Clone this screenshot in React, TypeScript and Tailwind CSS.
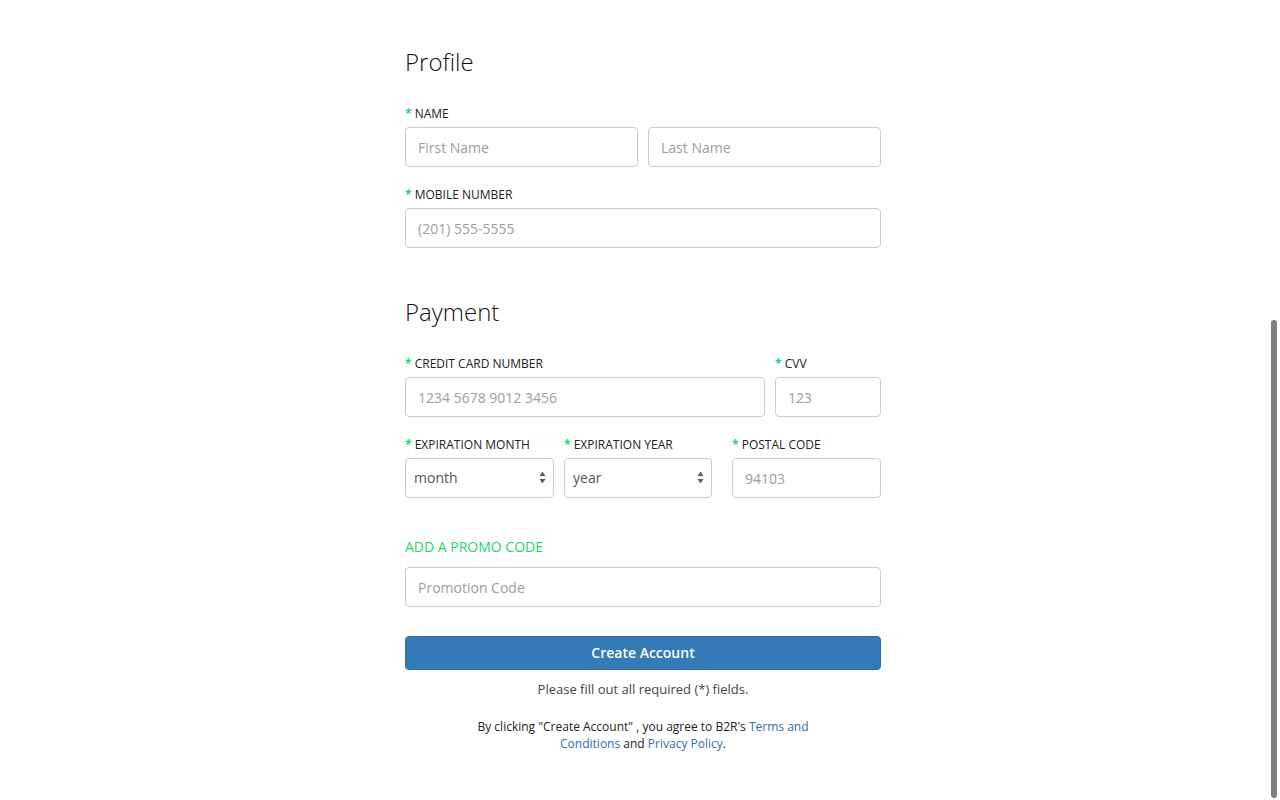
const font = { fontFamily: '"Open Sans", "Liberation Sans", sans-serif' };

function Label({ text, className = "" }: { text: string; className?: string }) {
  return (
    <div className={`text-[12px] leading-[16px] text-[#222] uppercase ${className}`}>
      <span className="font-bold text-[#25d27f]">*</span> {text}
    </div>
  );
}

function TextInput({ placeholder, className = "" }: { placeholder: string; className?: string }) {
  return (
    <input
      type="text"
      placeholder={placeholder}
      className={`block h-[40px] w-full rounded-[4px] border border-[#ccc] bg-white px-[12px] text-[14px] text-[#333] placeholder:text-[#9d9d9d] outline-none ${className}`}
    />
  );
}

function SelectBox({ value }: { value: string }) {
  return (
    <div className="relative h-[40px] w-full">
      <select
        defaultValue={value}
        className="block h-full w-full appearance-none rounded-[4px] border border-[#ccc] bg-white pl-[8px] pr-[24px] pb-[2px] text-[14px] text-[#555] outline-none"
      >
        <option value={value}>{value}</option>
      </select>
      <svg
        className="pointer-events-none absolute right-[8px] top-[13px]"
        width="7"
        height="13"
        viewBox="0 0 7 13"
      >
        <path d="M3.5 0.5 L6.5 5 L0.5 5 Z" fill="#5a5a5a" />
        <path d="M0.5 8 L6.5 8 L3.5 12.5 Z" fill="#5a5a5a" />
      </svg>
    </div>
  );
}

export default function App() {
  return (
    <div className="min-h-screen bg-white" style={font}>
      <div className="flex justify-center pl-[6px]">
        <form className="w-[476px] pt-[46px] pb-[40px]" onSubmit={(e) => e.preventDefault()}>
          <h2 className="text-[24px] leading-[32px] font-light text-[#111]">Profile</h2>

          <Label text="Name" className="mt-[28px]" />
          <div className="mt-[5px] grid grid-cols-2 gap-[10px]">
            <TextInput placeholder="First Name" />
            <TextInput placeholder="Last Name" />
          </div>

          <Label text="Mobile Number" className="mt-[20px]" />
          <TextInput placeholder="(201) 555-5555" className="mt-[5px]" />

          <h2 className="mt-[48px] text-[24px] leading-[32px] font-light text-[#111]">Payment</h2>

          <div className="mt-[28px] flex gap-[10px]">
            <div className="flex-1">
              <Label text="Credit Card Number" />
              <TextInput placeholder="1234 5678 9012 3456" className="mt-[5px]" />
            </div>
            <div className="w-[106px]">
              <Label text="CVV" />
              <TextInput placeholder="123" className="mt-[5px]" />
            </div>
          </div>

          <div className="mt-[20px] flex">
            <div className="w-[149px]">
              <Label text="Expiration Month" />
              <div className="mt-[5px]">
                <SelectBox value="month" />
              </div>
            </div>
            <div className="ml-[10px] w-[148px]">
              <Label text="Expiration Year" />
              <div className="mt-[5px]">
                <SelectBox value="year" />
              </div>
            </div>
            <div className="ml-[20px] flex-1">
              <Label text="Postal Code" />
              <TextInput placeholder="94103" className="mt-[5px]" />
            </div>
          </div>

          <div className="mt-[39px] text-[14px] leading-[20px] text-[#1ed76b] uppercase">Add a promo code</div>
          <TextInput placeholder="Promotion Code" className="mt-[10px]" />

          <button
            type="submit"
            className="mt-[29px] block h-[34px] w-full rounded-[4px] border border-[#2e6da4] bg-[#337ab7] pb-[2px] text-[14px] font-semibold text-white"
          >
            Create Account
          </button>

          <p className="mt-[10px] text-center text-[13px] leading-[18px] text-[#444]">
            Please fill out all required (*) fields.
          </p>

          <p className="mx-auto mt-[20px] w-[340px] text-center text-[12px] leading-[17px] text-[#222]">
            By clicking "Create Account" , you agree to B2R's{" "}
            <a href="#" className="text-[#2f6fb0]">Terms and</a>{" "}
            <a href="#" className="text-[#2f6fb0]">Conditions</a> and{" "}
            <a href="#" className="text-[#2f6fb0]">Privacy Policy</a>.
          </p>
        </form>
      </div>
      <div className="fixed right-[3px] top-[320px] h-[478px] w-[6px] rounded-full bg-[#7f7f7f]" />
    </div>
  );
}
